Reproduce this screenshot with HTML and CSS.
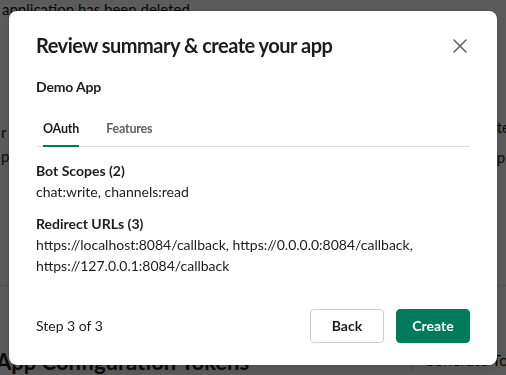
FILE: index.html
```html
<!DOCTYPE html>
<html lang="en">
<head>
<meta charset="utf-8">
<title>Review summary &amp; create your app</title>
<link rel="stylesheet" href="styles.css">
</head>
<body>
<div class="page">
  <p class="notice">application has been deleted</p>
  <div class="mid">
    <div class="side side-left">r<br>p</div>
    <div class="side side-right">te<br>p</div>
  </div>
  <div class="rule"></div>
  <div class="bottom">
    <h2 class="bottom-title">App Configuration Tokens</h2>
    <div class="gen">Generate Tokens</div>
  </div>
</div>

<div class="overlay">
  <div class="modal" role="dialog" aria-label="Review summary &amp; create your app">
    <div class="modal-header">
      <h1 class="modal-title">Review summary &amp; create your app</h1>
      <button class="close" aria-label="Close">
        <svg width="14" height="14" viewBox="0 0 14 14" aria-hidden="true">
          <path d="M1 1 L13 13 M13 1 L1 13" stroke="#5e5d60" stroke-width="1.5" stroke-linecap="round" fill="none"/>
        </svg>
      </button>
    </div>
    <div class="modal-body">
      <div class="app-name">Demo App</div>
      <div class="tabs">
        <div class="tab tab-active">OAuth</div>
        <div class="tab">Features</div>
      </div>
      <div class="section">
        <div class="section-title">Bot Scopes (2)</div>
        <div class="section-text">chat:write, channels:read</div>
      </div>
      <div class="section">
        <div class="section-title">Redirect URLs (3)</div>
        <div class="section-text">https://localhost:8084/callback, https://0.0.0.0:8084/callback, https://127.0.0.1:8084/callback</div>
      </div>
    </div>
    <div class="modal-footer">
      <div class="step">Step 3 of 3</div>
      <div class="actions">
        <button class="btn btn-secondary">Back</button>
        <button class="btn btn-primary">Create</button>
      </div>
    </div>
  </div>
</div>
</body>
</html>
```

FILE: styles.css
```css
* { box-sizing: border-box; }

html, body {
  margin: 0;
  padding: 0;
  width: 506px;
  height: 375px;
  overflow: hidden;
}

body {
  font-family: Lato, "Noto Sans", "Liberation Sans", sans-serif;
  color: #1d1c1d;
  background: #ffffff;
}

/* Background page (dimmed behind the modal) */
.page {
  display: flex;
  flex-direction: column;
  height: 375px;
}

.notice {
  margin: 0;
  padding: 0 0 0 2px;
  font-size: 15px;
  line-height: 18px;
}

.mid {
  display: flex;
  justify-content: space-between;
  margin-top: 102px;
  font-size: 15px;
  line-height: 24px;
}

.side-left { padding-left: 1px; }
.side-right { margin-right: -4px; margin-top: -8px; line-height: 30px; }

.rule {
  margin-top: 113px;
  border-top: 1px dashed #cfcfcf;
}

.bottom {
  display: flex;
  align-items: flex-start;
  justify-content: space-between;
  margin-top: 64px;
}

.bottom-title {
  margin: 0 0 0 -4px;
  font-size: 22px;
  font-weight: 700;
  line-height: 24px;
  white-space: nowrap;
}

.gen {
  border-left: 1px solid #cfcfcf;
  padding: 12px 0 0 10px;
  margin-top: -12px;
  font-size: 16px;
  line-height: 20px;
  white-space: nowrap;
  width: 94px;
  overflow: hidden;
}

/* Overlay + modal */
.overlay {
  position: fixed;
  inset: 0;
  background: rgba(0, 0, 0, 0.645);
  display: flex;
  align-items: center;
  justify-content: center;
}

.modal {
  width: 488px;
  background: #ffffff;
  border-radius: 8px;
  box-shadow: 0 0 0 1px rgba(0, 0, 0, 0.08), 0 4px 12px rgba(0, 0, 0, 0.12);
  padding: 0 27px;
}

.modal-header {
  display: flex;
  align-items: center;
  justify-content: space-between;
  padding-top: 20px;
}

.modal-title {
  margin: 0;
  font-size: 20px;
  line-height: 28px;
  font-weight: 700;
  letter-spacing: -0.5px;
}

.close {
  border: 0;
  background: none;
  padding: 0;
  width: 14px;
  height: 14px;
  margin-right: 3px;
  margin-top: 3px;
  display: flex;
}

.modal-body {
  padding-top: 18px;
}

.app-name {
  font-size: 14px;
  line-height: 20px;
  font-weight: 700;
  letter-spacing: -0.15px;
}

.tabs {
  display: flex;
  gap: 27px;
  padding-left: 7px;
  margin-top: 22px;
  border-bottom: 1px solid #dddddd;
}

.tab {
  font-size: 12.5px;
  line-height: 20px;
  font-weight: 700;
  letter-spacing: -0.2px;
  color: #616061;
  padding-bottom: 6px;
  border-bottom: 2px solid transparent;
  margin-bottom: -1px;
}

.tab-active {
  color: #1d1c1d;
  border-bottom-color: #007a5a;
}

.section {
  margin-top: 14px;
}

.section + .section {
  margin-top: 12px;
}

.section-title {
  font-size: 14px;
  line-height: 20px;
  font-weight: 700;
}

.section-text {
  font-size: 14px;
  line-height: 21px;
}

.modal-footer {
  display: flex;
  align-items: center;
  justify-content: space-between;
  padding: 33px 0 22px;
}

.step {
  font-size: 14px;
  line-height: 20px;
}

.actions {
  display: flex;
  gap: 12px;
}

.btn {
  font-family: Lato, "Noto Sans", "Liberation Sans", sans-serif;
  font-size: 14px;
  font-weight: 700;
  height: 34px;
  width: 74px;
  border-radius: 4px;
  cursor: pointer;
  padding: 0;
}

.btn-secondary {
  background: #ffffff;
  color: #1d1c1d;
  border: 1px solid #cfcfcf;
}

.btn-primary {
  background: #007a5a;
  color: #ffffff;
  border: 1px solid #007a5a;
}
```
